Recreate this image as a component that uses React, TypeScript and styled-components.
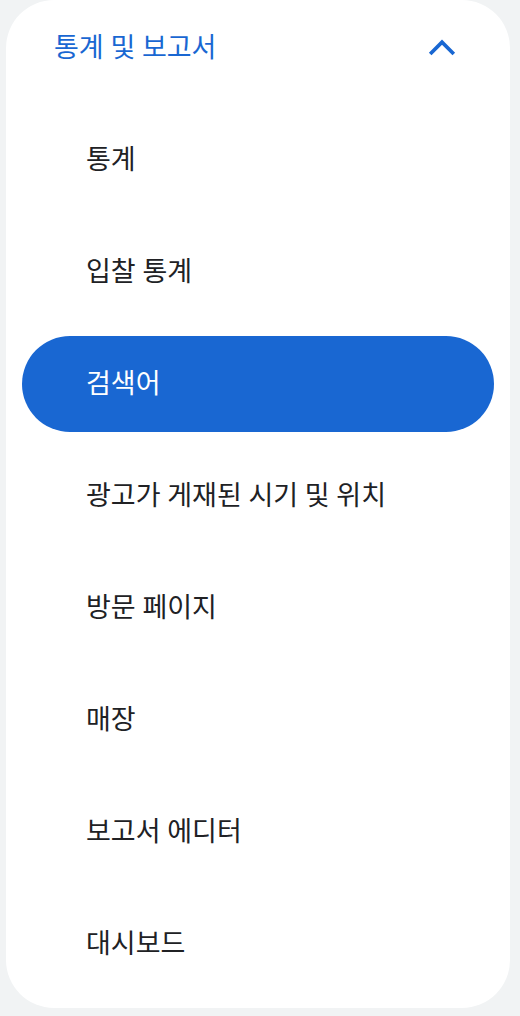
import React, { useState } from 'react';
import styled, { createGlobalStyle } from 'styled-components';

const items = [
  '통계',
  '입찰 통계',
  '검색어',
  '광고가 게재된 시기 및 위치',
  '방문 페이지',
  '매장',
  '보고서 에디터',
  '대시보드',
];

const GlobalStyle = createGlobalStyle`
  * {
    box-sizing: border-box;
  }
  body {
    margin: 0;
    background: #f1f3f4;
    font-family: Roboto, 'Noto Sans CJK KR', sans-serif;
    font-size: 27px;
    font-weight: 400;
    line-height: 40px;
    color: #202124;
  }
`;

const Panel = styled.nav`
  margin: 0 10px 8px 6px;
  padding: 0 16px 16px;
  background: #fff;
  border-radius: 48px;
`;

const SectionButton = styled.button`
  display: flex;
  align-items: center;
  justify-content: space-between;
  width: 100%;
  height: 96px;
  padding: 0 36px 0 32px;
  border: 0;
  background: none;
  font: inherit;
  color: #1967d2;
  cursor: pointer;
`;

const Chevron = styled.svg<{ $open: boolean }>`
  width: 32px;
  height: 32px;
  transform: ${({ $open }) => ($open ? 'none' : 'rotate(180deg)')};
`;

const List = styled.ul`
  display: flex;
  flex-direction: column;
  gap: 16px;
  margin: 16px 0 0;
  padding: 0;
  list-style: none;
`;

const ItemLink = styled.a<{ $active: boolean }>`
  display: flex;
  align-items: center;
  height: 96px;
  padding: 0 64px;
  border-radius: 48px;
  background: ${({ $active }) => ($active ? '#1967d2' : 'transparent')};
  color: ${({ $active }) => ($active ? '#fff' : '#202124')};
  text-decoration: none;
`;

const App = () => {
  const [open, setOpen] = useState(true);
  const [active, setActive] = useState('검색어');

  return (
    <>
      <GlobalStyle />
      <Panel>
        <SectionButton type="button" aria-expanded={open} onClick={() => setOpen(!open)}>
          통계 및 보고서
          <Chevron $open={open} viewBox="0 0 32 32" aria-hidden="true">
            <path d="M4.2 22 16 10.2 27.8 22" fill="none" stroke="currentColor" strokeWidth="3.7" />
          </Chevron>
        </SectionButton>
        {open && (
          <List>
            {items.map((item) => (
              <li key={item}>
                <ItemLink
                  href="#"
                  $active={item === active}
                  aria-current={item === active ? 'page' : undefined}
                  onClick={(e) => {
                    e.preventDefault();
                    setActive(item);
                  }}
                >
                  {item}
                </ItemLink>
              </li>
            ))}
          </List>
        )}
      </Panel>
    </>
  );
};

export default App;
